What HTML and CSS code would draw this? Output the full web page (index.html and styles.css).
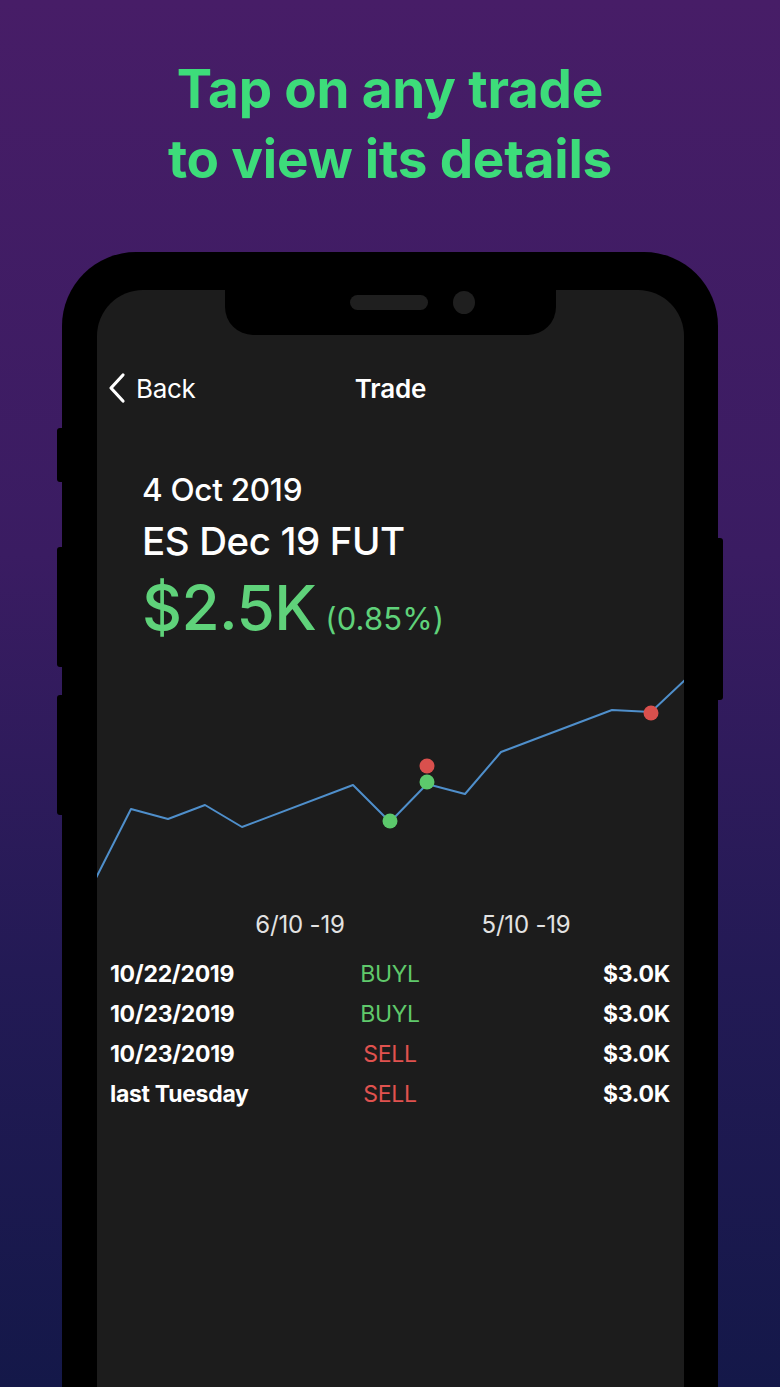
FILE: index.html
```html
<!DOCTYPE html>
<html lang="en">
<head>
<meta charset="utf-8">
<title>Trade details</title>
<link rel="stylesheet" href="styles.css">
</head>
<body>
<div class="page">
  <h1 class="headline">Tap on any trade<br>to view its details</h1>

  <div class="phone">
    <span class="btn btn-silent"></span>
    <span class="btn btn-vol-up"></span>
    <span class="btn btn-vol-down"></span>
    <span class="btn btn-power"></span>

    <div class="screen">
      <div class="notch">
        <span class="speaker"></span>
        <span class="camera"></span>
      </div>

      <div class="nav">
        <div class="back">
          <svg class="chev" width="20" height="32" viewBox="0 0 20 32"><path d="M16 3 L4 16 L16 29" fill="none" stroke="#fff" stroke-width="3.2" stroke-linecap="round" stroke-linejoin="round"/></svg>
          <span>Back</span>
        </div>
        <div class="nav-title">Trade</div>
      </div>

      <div class="summary">
        <div class="date">4 Oct 2019</div>
        <div class="symbol">ES Dec 19 FUT</div>
        <div class="pnl"><span class="pnl-value">$2.5K</span><span class="pnl-pct">(0.85%)</span></div>
      </div>

      <svg class="chart" width="587" height="230" viewBox="0 0 587 230">
        <polyline fill="none" stroke="#4f8fcb" stroke-width="2" stroke-linejoin="round"
          points="-1,208 34,139 71,149 108,135 145,157 256,115 293,152 330,114 368,124 404,82 441,68 515,40 554,42 588,10"/>
        <circle cx="293" cy="151" r="7.5" fill="#5cc96c"/>
        <circle cx="330" cy="96" r="7.5" fill="#d9504d"/>
        <circle cx="330" cy="112" r="7.5" fill="#5cc96c"/>
        <circle cx="554" cy="43" r="7.5" fill="#d9504d"/>
      </svg>

      <div class="axis">
        <span>6/10 -19</span>
        <span>5/10 -19</span>
      </div>

      <div class="trades">
        <div class="trade"><span class="t-date">10/22/2019</span><span class="t-side buy">BUYL</span><span class="t-amt">$3.0K</span></div>
        <div class="trade"><span class="t-date">10/23/2019</span><span class="t-side buy">BUYL</span><span class="t-amt">$3.0K</span></div>
        <div class="trade"><span class="t-date">10/23/2019</span><span class="t-side sell">SELL</span><span class="t-amt">$3.0K</span></div>
        <div class="trade"><span class="t-date">last Tuesday</span><span class="t-side sell">SELL</span><span class="t-amt">$3.0K</span></div>
      </div>
    </div>
  </div>
</div>
</body>
</html>
```

FILE: styles.css
```css
* { box-sizing: border-box; }

html, body {
  margin: 0;
  padding: 0;
}

body {
  width: 780px;
  height: 1387px;
  overflow: hidden;
  background: linear-gradient(180deg, #471d67 0%, #3a1c62 40%, #231a55 70%, #141849 100%);
  font-family: Inter, "Noto Sans", "Liberation Sans", sans-serif;
}

.page {
  width: 780px;
  height: 1387px;
  overflow: hidden;
  display: flex;
  flex-direction: column;
  align-items: center;
}

.headline {
  margin: 54px 0 0;
  font-family: Inter, "Liberation Sans", sans-serif;
  font-weight: 700;
  font-size: 53px;
  line-height: 70px;
  letter-spacing: -0.2px;
  color: #3ddc7a;
  text-align: center;
}

.phone {
  position: relative;
  flex: none;
  margin-top: 58px;
  width: 656px;
  height: 1135px;
  background: #000;
  border-radius: 74px 74px 0 0;
  padding: 38px 34px 0 35px;
}

.btn {
  position: absolute;
  background: #000;
  width: 8px;
  border-radius: 3px;
}
.btn-silent { left: -5px; top: 176px; height: 54px; }
.btn-vol-up { left: -5px; top: 295px; height: 120px; }
.btn-vol-down { left: -5px; top: 443px; height: 120px; }
.btn-power { right: -5px; top: 286px; height: 162px; }

.screen {
  position: relative;
  width: 587px;
  height: 1097px;
  background: #1c1c1c;
  border-radius: 46px 46px 0 0;
  overflow: hidden;
}

.notch {
  position: absolute;
  top: 0;
  left: 128px;
  width: 331px;
  height: 45px;
  background: #000;
  border-radius: 0 0 28px 28px;
}
.speaker {
  position: absolute;
  left: 125px;
  top: 5px;
  width: 78px;
  height: 15px;
  border-radius: 8px;
  background: #1f1f1f;
}
.camera {
  position: absolute;
  left: 228px;
  top: 1px;
  width: 22px;
  height: 23px;
  border-radius: 50%;
  background: #1f1f1f;
}

.nav {
  position: relative;
  height: 44px;
  margin-top: 76px;
  display: flex;
  align-items: center;
  justify-content: center;
  color: #fff;
}
.back {
  position: absolute;
  left: 10px;
  top: 0;
  height: 44px;
  display: flex;
  align-items: center;
  gap: 9px;
  font-size: 26px;
  font-weight: 400;
  letter-spacing: -0.3px;
}
.chev { display: block; }
.nav-title {
  font-size: 26px;
  font-weight: 600;
  letter-spacing: -0.2px;
}

.summary {
  padding-left: 45px;
  margin-top: 55px;
  color: #fff;
}
.date {
  font-size: 31.5px;
  font-weight: 500;
  line-height: 50px;
  letter-spacing: -0.3px;
}
.symbol {
  font-size: 38.5px;
  font-weight: 500;
  line-height: 52px;
  letter-spacing: -0.4px;
}
.pnl {
  display: flex;
  align-items: baseline;
  gap: 9px;
  color: #5fd27a;
  margin-top: 8px;
}
.pnl-value {
  font-size: 62px;
  font-weight: 500;
  line-height: 66px;
  letter-spacing: -0.6px;
}
.pnl-pct {
  font-size: 31px;
  font-weight: 400;
  letter-spacing: 0.1px;
}

.chart {
  display: block;
  margin-top: 29px;
}

.axis {
  display: flex;
  height: 30px;
  margin-top: 10px;
  font-size: 24px;
  color: #e2e2e2;
  letter-spacing: -0.2px;
}
.axis span {
  width: 120px;
  text-align: center;
}
.axis span:first-child { margin-left: 143px; }
.axis span:last-child { margin-left: 106px; }

.trades {
  margin-top: 14px;
  padding: 0 14px 0 13px;
  display: flex;
  flex-direction: column;
}
.trade {
  display: grid;
  grid-template-columns: 1fr auto 1fr;
  align-items: center;
  height: 40px;
  font-size: 23px;
  letter-spacing: -0.3px;
}
.t-date {
  font-weight: 700;
  color: #fff;
}
.t-side {
  font-weight: 400;
  text-align: center;
}
.t-side.buy { color: #5fc96b; }
.t-side.sell { color: #e0524f; }
.t-amt {
  font-weight: 700;
  color: #fff;
  text-align: right;
}
```
